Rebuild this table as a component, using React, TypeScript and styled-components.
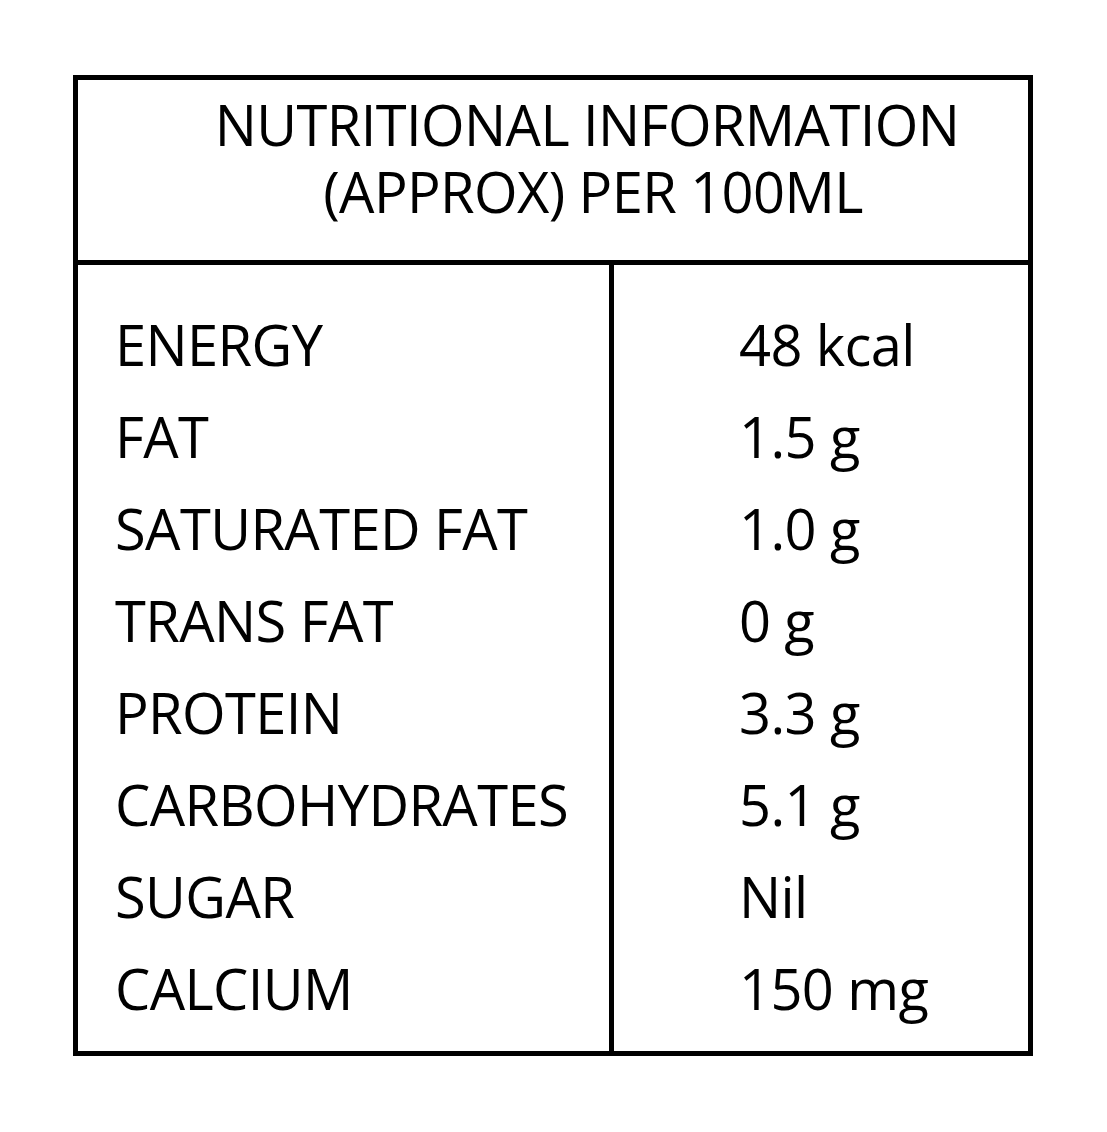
import styled, { createGlobalStyle } from 'styled-components';

const GlobalStyle = createGlobalStyle`
  html, body {
    margin: 0;
    padding: 0;
    background: #ffffff;
  }
  body {
    font-family: 'Open Sans', 'Noto Sans', sans-serif;
    color: #000000;
  }
`;

const Page = styled.div`
  padding: 75px 0 0 73px;
  width: 1107px;
  height: 1132px;
  box-sizing: border-box;
`;

const Panel = styled.div`
  width: 960px;
  height: 981px;
  box-sizing: border-box;
  border: 5px solid #000;
  display: flex;
  flex-direction: column;
`;

const Header = styled.div`
  height: 185px;
  box-sizing: border-box;
  border-bottom: 5px solid #000;
  padding: 11px 0 0 68px;
  text-align: center;
  font-size: 56px;
  letter-spacing: -0.6px;
`;

const HeaderLine = styled.div<{ $shift?: number }>`
  height: 67px;
  line-height: 67px;
  white-space: nowrap;
  padding-left: ${(p) => p.$shift ?? 0}px;
`;

const Body = styled.div`
  flex: 1;
  display: grid;
  grid-template-columns: 536px 1fr;
`;

const Column = styled.div<{ $divider?: boolean; $inset: number }>`
  box-sizing: border-box;
  padding: 33px 0 0 ${(p) => p.$inset}px;
  border-right: ${(p) => (p.$divider ? '5px solid #000' : 'none')};
  display: flex;
  flex-direction: column;
`;

const Row = styled.div`
  font-size: 56px;
  line-height: 92px;
  height: 92px;
  white-space: nowrap;
  letter-spacing: -0.6px;
`;

const nutrients: [string, string][] = [
  ['ENERGY', '48 kcal'],
  ['FAT', '1.5 g'],
  ['SATURATED FAT', '1.0 g'],
  ['TRANS FAT', '0 g'],
  ['PROTEIN', '3.3 g'],
  ['CARBOHYDRATES', '5.1 g'],
  ['SUGAR', 'Nil'],
  ['CALCIUM', '150 mg'],
];

export default function App() {
  return (
    <Page>
      <GlobalStyle />
      <Panel>
        <Header>
          <HeaderLine $shift={-4}>NUTRITIONAL INFORMATION</HeaderLine>
          <HeaderLine $shift={12}>(APPROX) PER 100ML</HeaderLine>
        </Header>
        <Body>
          <Column $divider $inset={37}>
            {nutrients.map(([name]) => (
              <Row key={name}>{name}</Row>
            ))}
          </Column>
          <Column $inset={125}>
            {nutrients.map(([name, value]) => (
              <Row key={name}>{value}</Row>
            ))}
          </Column>
        </Body>
      </Panel>
    </Page>
  );
}
